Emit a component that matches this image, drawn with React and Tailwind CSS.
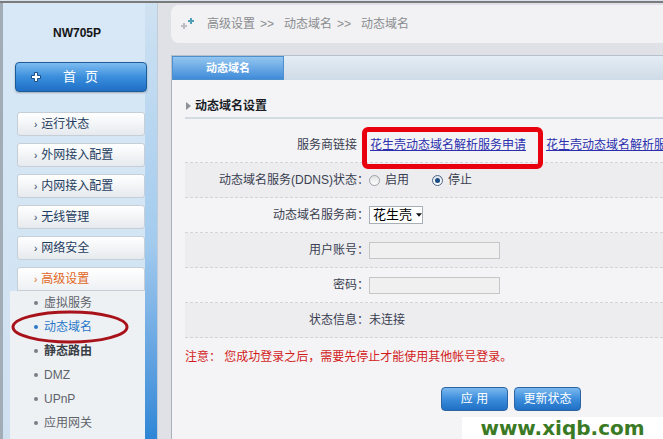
import React from 'react';

const menu = ['运行状态', '外网接入配置', '内网接入配置', '无线管理', '网络安全'];
const subMenu = [
    { name: '虚拟服务' },
    { name: '动态域名', active: true },
    { name: '静态路由', strong: true },
    { name: 'DMZ' },
    { name: 'UPnP' },
    { name: '应用网关' },
];

const PlusMark = () => (
    <svg width="18" height="14" viewBox="0 0 18 14">
        <path d="M2 9h6M5 6v6" stroke="#b9bcc2" strokeWidth="2" />
        <path d="M9 4h6M12 1v6" stroke="#4f9fb8" strokeWidth="2" />
    </svg>
);

const HomePlus = () => (
    <svg width="10" height="10" viewBox="0 0 10 10">
        <path d="M3.5 0.5h3v3h3v3h-3v3h-3v-3h-3v-3h3z" fill="#ffffff" stroke="#1b4f86" strokeWidth="1" />
    </svg>
);

const Radio = ({ checked }) => (
    <span className={checked
        ? "w-[11px] h-[11px] rounded-full border border-[#4b6584] bg-linear-to-b from-[#dfe6ee] to-white flex items-center justify-center"
        : "w-[11px] h-[11px] rounded-full border border-[#9aa0a6] bg-linear-to-b from-[#e2e2e2] to-white flex items-center justify-center"}>
        {checked && <span className="w-[5px] h-[5px] rounded-full bg-[#1d4c82]" />}
    </span>
);

const Row = ({ label, shaded, hideColon, children }) => (
    <div className={shaded
        ? "flex h-[35px] items-center border-b border-dashed border-[#d3d3d8] bg-[#ededf0]"
        : "flex h-[35px] items-center border-b border-dashed border-[#d3d3d8]"}>
        <div className="w-[184px] shrink-0 text-right text-[12px] text-[#3a4050] whitespace-nowrap">
            {label}<span className={hideColon ? "invisible" : ""}>：</span>
        </div>
        <div className="flex items-center text-[12px] text-[#3a4050] whitespace-nowrap">{children}</div>
    </div>
);

export default function App() {
    return (
        <div className="relative w-[663px] h-[439px] overflow-hidden flex flex-col bg-[#dfe1e6] font-['Liberation_Sans','Noto_Sans_CJK_SC',sans-serif]">
            <div className="h-[1px] bg-[#d8e2ec]" />
            <div className="h-[2px] bg-[#7b7b7b]" />
            <div className="flex flex-1 min-h-0">
                {/* sidebar */}
                <aside className="flex w-[158px] shrink-0 border-l-[3px] border-[#a2acb6]">
                    <div className="w-[142px] flex flex-col bg-linear-to-b from-[#d8e8f6] to-[#cfe1f1]">
                        <div className="mt-[22px] h-[16px] leading-[16px] text-center pl-[6px] text-[12px] font-bold text-[#151515]">NW705P</div>
                        <div className="relative z-10 mt-[21px] ml-[12px] w-[132px] h-[30px] shrink-0 flex items-center pl-[15px] rounded-[4px] border border-[#1d5a98] bg-linear-to-b from-[#7dbcf0] via-[#3a8edc] to-[#1f6fc6] shadow-[0_1px_2px_rgba(0,0,0,0.25)]">
                            <HomePlus />
                            <span className="ml-[22px] text-[13px] text-white">首</span>
                            <span className="ml-[9px] text-[13px] text-white">页</span>
                        </div>
                        <div className="mt-[20px] ml-[14px] w-[128px] flex flex-col gap-[7px]">
                            {menu.map((m) => (
                                <div key={m} className="h-[24px] flex items-center pl-[16px] rounded-[3px] border border-[#c6cfd8] bg-linear-to-b from-white to-[#e6eaee] text-[12px] text-[#1f3d60]">
                                    <span className="text-[10px] mr-[4px]">›</span>{m}
                                </div>
                            ))}
                            <div className="h-[24px] flex items-center pl-[16px] rounded-t-[3px] border border-[#c6cfd8] bg-linear-to-b from-white to-[#eef1f4] text-[12px] text-[#e2661c]">
                                <span className="text-[10px] mr-[4px]">›</span>高级设置
                            </div>
                        </div>
                        <div className="ml-[7px] w-[135px] flex-1 bg-[#eef1f4]">
                            {subMenu.map((s) => (
                                <div key={s.name} className="h-[24px] flex items-center pl-[24px]">
                                    <span className={s.active ? "w-[4px] h-[4px] rounded-full bg-[#2a78c8]" : "w-[4px] h-[4px] rounded-full bg-[#7a7f86]"} />
                                    <span className={s.active
                                        ? "ml-[6px] text-[12px] text-[#2a78c8]"
                                        : s.strong ? "ml-[6px] text-[12px] font-bold text-[#3a3f46]" : "ml-[6px] text-[12px] text-[#5e636a]"}>{s.name}</span>
                                </div>
                            ))}
                        </div>
                    </div>
                    <div className="w-[13px] border-r border-[#c3cdd8] bg-linear-to-b from-[#cfe2f2] via-[#a3cbee] via-55% to-[#2d86d6]" />
                </aside>

                {/* main */}
                <main className="flex-1 flex flex-col pl-[13px] min-w-0">
                    <div className="mt-[2px] h-[38px] shrink-0 flex items-center pl-[8px] rounded-l-[8px] bg-[#f2f2f4] text-[12px] text-[#8a8c90] whitespace-nowrap">
                        <PlusMark />
                        <span className="ml-[10px]">高级设置</span>
                        <span className="ml-[5px] mr-[10px]">&gt;&gt;</span>
                        <span>动态域名</span>
                        <span className="ml-[5px] mr-[10px]">&gt;&gt;</span>
                        <span>动态域名</span>
                    </div>

                    <div className="mt-[12px] h-[25px] shrink-0 flex border-t border-l border-[#b7c1cc] bg-linear-to-b from-[#e4ecf4] to-[#cfdbe8]">
                        <div className="w-[112px] flex items-center justify-center border border-[#4f8fcc] bg-linear-to-b from-[#93c6f0] to-[#3f8bd8] text-[11px] font-bold text-white">动态域名</div>
                    </div>

                    <div className="flex-1 flex flex-col overflow-hidden border-l border-[#a9b1ba] bg-[#f4f4f6] pl-[13px]">
                        <div className="pt-[18px] pb-[3px] border-b-2 border-[#d4dce3] flex items-center">
                            <svg width="5" height="8" viewBox="0 0 5 8" className="ml-[1px]"><path d="M0 0l5 4-5 4z" fill="#8e9298" /></svg>
                            <span className="ml-[4px] h-[16px] leading-[16px] text-[12px] font-bold text-[#1a1d26]">动态域名设置</span>
                        </div>

                        <div className="mt-[9px] flex flex-col">
                            <Row label="服务商链接" hideColon>
                                <span className="ml-[1px] text-[#2b2fae] underline">花生壳动态域名解析服务申请</span>
                                <span className="ml-[20px] text-[#2b2fae] underline">花生壳动态域名解析服务帮助</span>
                            </Row>
                            <Row label="动态域名服务(DDNS)状态" shaded>
                                <Radio />
                                <span className="ml-[5px]">启用</span>
                                <span className="ml-[23px]"><Radio checked /></span>
                                <span className="ml-[5px]">停止</span>
                            </Row>
                            <Row label="动态域名服务商">
                                <div className="h-[18px] w-[54px] flex items-center pl-[3px] border border-[#a8afb6] bg-white text-[13px] text-black">
                                    花生壳
                                    <svg width="7" height="4" viewBox="0 0 7 4" className="ml-[4px]"><path d="M0 0h7L3.5 4z" fill="#111" /></svg>
                                </div>
                            </Row>
                            <Row label="用户账号" shaded>
                                <div className="h-[17px] w-[131px] border border-[#c6c6c6] bg-[#f0f0f0]" />
                            </Row>
                            <Row label="密码">
                                <div className="h-[17px] w-[131px] border border-[#c6c6c6] bg-[#f0f0f0]" />
                            </Row>
                            <Row label="状态信息" shaded>
                                <span>未连接</span>
                            </Row>
                        </div>

                        <div className="mt-[11px] h-[16px] leading-[16px] text-[12px] text-[#d21c1c] whitespace-nowrap">
                            注意： 您成功登录之后，需要先停止才能使用其他帐号登录。
                        </div>

                        <div className="mt-[22px] ml-[256px] flex gap-[6px]">
                            <button className="w-[67px] h-[24px] rounded-[4px] border border-[#2a64a2] bg-linear-to-b from-[#7ab8ee] via-[#3c8ddc] to-[#1f6fc4] text-[12px] text-white">应 用</button>
                            <button className="w-[67px] h-[24px] rounded-[4px] border border-[#2a64a2] bg-linear-to-b from-[#7ab8ee] via-[#3c8ddc] to-[#1f6fc4] text-[12px] text-white">更新状态</button>
                        </div>
                    </div>
                </main>
            </div>

            {/* annotations */}
            <div className="absolute left-[362px] top-[127px] w-[181px] h-[42px] rounded-[6px] border-[5px] border-[#e8000e]" />
            <svg className="absolute left-[11px] top-[310px]" width="118" height="34" viewBox="0 0 118 34">
                <ellipse cx="59" cy="17" rx="57" ry="15" fill="none" stroke="#a8121a" strokeWidth="3" />
            </svg>
            <div className="absolute right-0 bottom-0 w-[201px] h-[22px] bg-white flex items-center justify-center text-[20px] font-bold leading-none text-[#3b7a25] font-['DejaVu_Sans',sans-serif]">
                www.xiqb.com
            </div>
        </div>
    );
}
